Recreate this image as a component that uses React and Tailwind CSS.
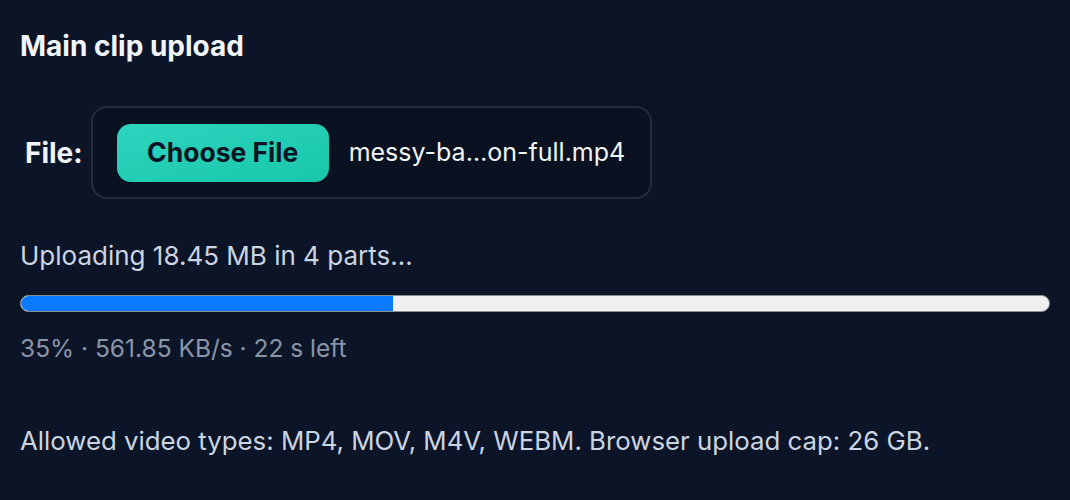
export default function App() {
  const progress = 36.2;

  return (
    <div className="min-h-screen w-full bg-[#0c1427] font-['Inter',sans-serif] text-[#e2e8f0]">
      <div className="px-5 pt-[28px]">
        {/* title */}
        <h2 className="text-[28px] leading-[36px] font-bold text-[#f1f5f9]">Main clip upload</h2>

        {/* file picker */}
        <div className="mt-[42px] flex items-center gap-2">
          <span className="pl-[5px] text-[28px] font-bold text-[#f1f5f9]">File:</span>
          <div className="flex h-[93px] w-[561px] items-center gap-5 rounded-[16px] border-2 border-[#232d3f] bg-[#0a1120] pl-[24px]">
            <button className="h-[58px] w-[212px] rounded-[14px] bg-gradient-to-br from-[#2dd4bf] to-[#17c7a9] text-[26.5px] font-bold text-[#0b1324]">
              Choose File
            </button>
            <span className="text-[25px] text-[#f1f5f9]">messy-ba…on-full.mp4</span>
          </div>
        </div>

        {/* upload status */}
        <p className="mt-[39px] text-[26px] leading-[36px] text-[#cbd5e1]">Uploading 18.45 MB in 4 parts...</p>
        <div className="mt-[21px] h-[17px] w-full overflow-hidden rounded-full border border-[#8b8f96] bg-[#efefef]">
          <div className="h-full rounded-l-full bg-[#0a7aff]" style={{ width: `${progress}%` }}></div>
        </div>
        <p className="mt-[19px] text-[24.5px] leading-[34px] text-[#8a96a8]">35% · 561.85 KB/s · 22 s left</p>

        <p className="mt-[58px] text-[25.8px] leading-[36px] text-[#cbd5e1]">
          Allowed video types: MP4, MOV, M4V, WEBM. Browser upload cap: 26 GB.
        </p>
      </div>
    </div>
  );
}
